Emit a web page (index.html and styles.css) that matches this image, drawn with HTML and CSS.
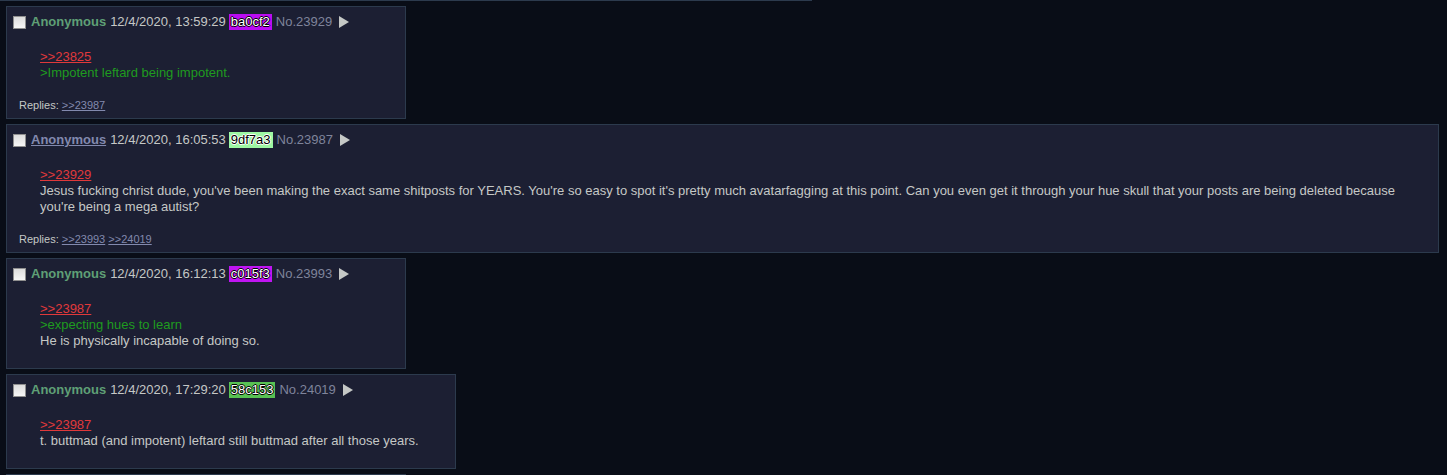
FILE: index.html
```html
<!DOCTYPE html>
<html>
<head>
    <meta charset="utf-8">
    <link rel="stylesheet" href="styles.css">
    <title>/pol/ - Thread</title>
</head>
<body>
    <div class="thread">
        <!-- bottom edge of the post above, scrolled out of view -->
        <div class="prev-edge"></div>

        <div class="post" id="p23929">
            <div class="post-info">
                <span class="check"></span>
                <span class="name">Anonymous</span>
                <span class="date">12/4/2020, 13:59:29</span>
                <span class="uid" style="background-color: #ba0cf2">ba0cf2</span>
                <span class="post-num">No.23929</span>
                <span class="menu-arrow"></span>
            </div>
            <blockquote class="post-message">
                <a href="#p23825" class="quote-link">&gt;&gt;23825</a><br>
                <span class="greentext">&gt;Impotent leftard being impotent.</span>
            </blockquote>
            <div class="replies">Replies: <a href="#p23987">&gt;&gt;23987</a></div>
        </div>

        <div class="post" id="p23987">
            <div class="post-info">
                <span class="check"></span>
                <a href="#" class="name name-email">Anonymous</a>
                <span class="date">12/4/2020, 16:05:53</span>
                <span class="uid uid-light" style="background-color: #9df7a3">9df7a3</span>
                <span class="post-num">No.23987</span>
                <span class="menu-arrow"></span>
            </div>
            <blockquote class="post-message">
                <a href="#p23929" class="quote-link">&gt;&gt;23929</a><br>
                Jesus fucking christ dude, you've been making the exact same shitposts for YEARS. You're so easy to spot it's pretty much avatarfagging at this point. Can you even get it through your hue skull that your posts are being deleted because you're being a mega autist?
            </blockquote>
            <div class="replies">Replies: <a href="#p23993">&gt;&gt;23993</a> <a href="#p24019">&gt;&gt;24019</a></div>
        </div>

        <div class="post" id="p23993">
            <div class="post-info">
                <span class="check"></span>
                <span class="name">Anonymous</span>
                <span class="date">12/4/2020, 16:12:13</span>
                <span class="uid" style="background-color: #c015f3">c015f3</span>
                <span class="post-num">No.23993</span>
                <span class="menu-arrow"></span>
            </div>
            <blockquote class="post-message">
                <a href="#p23987" class="quote-link">&gt;&gt;23987</a><br>
                <span class="greentext">&gt;expecting hues to learn</span><br>
                He is physically incapable of doing so.
            </blockquote>
        </div>

        <div class="post" id="p24019">
            <div class="post-info">
                <span class="check"></span>
                <span class="name">Anonymous</span>
                <span class="date">12/4/2020, 17:29:20</span>
                <span class="uid" style="background-color: #58c153">58c153</span>
                <span class="post-num">No.24019</span>
                <span class="menu-arrow"></span>
            </div>
            <blockquote class="post-message">
                <a href="#p23987" class="quote-link">&gt;&gt;23987</a><br>
                t. buttmad (and impotent) leftard still buttmad after all those years.
            </blockquote>
        </div>

        <!-- next post, only its top edge is in view -->
        <div class="post post-next"></div>
    </div>
</body>
</html>
```

FILE: styles.css
```css
body {
    background-color: #090d17;
    color: #c5c8c6;
    font-family: Arial, 'Liberation Sans', Helvetica, sans-serif;
    font-size: 13px;
    margin: 0;
    padding: 0;
    height: 100vh;
    overflow: hidden;
}

a {
    color: inherit;
}

.thread {
    display: flex;
    flex-direction: column;
    align-items: flex-start;
    padding: 0 8px 0 6px;
}

.prev-edge {
    width: 812px;
    height: 1px;
    margin-left: -6px;
    background-color: #2c3a4d;
}

/* Reply box */
.post {
    box-sizing: border-box;
    min-width: 400px;
    max-width: 100%;
    margin-top: 5px;
    padding: 7px 0 6px;
    background-color: #1c1f33;
    border: 1px solid #2c3a4d;
}

.post-next {
    height: 1px;
    padding: 0;
    border-bottom: none;
}

/* Header row */
.post-info {
    display: flex;
    align-items: center;
    height: 16px;
    line-height: 16px;
    padding-left: 6px;
    white-space: nowrap;
}

.check {
    box-sizing: border-box;
    width: 13px;
    height: 13px;
    margin-right: 5px;
    border: 1px solid #8f8f8f;
    background: linear-gradient(#dcdcdc, #f6f6f6);
}

.name {
    color: #5f9f76;
    font-weight: bold;
    margin-right: 4px;
}

.name-email {
    color: #8289ae;
    text-decoration: underline;
}

.date {
    margin-right: 3px;
}

.uid {
    padding: 0 2px;
    margin-right: 4px;
    color: #ffffff;
    text-shadow: -1px 0 #000, 1px 0 #000, 0 -1px #000, 0 1px #000;
}

.uid-light {
    color: #000000;
    text-shadow: -1px 0 #fff, 1px 0 #fff, 0 -1px #fff, 0 1px #fff;
}

.post-num {
    color: #7f849b;
    margin-right: 7px;
}

.menu-arrow {
    width: 0;
    height: 0;
    border-top: 6px solid transparent;
    border-bottom: 6px solid transparent;
    border-left: 10px solid #c5c8c6;
}

/* Message body */
.post-message {
    margin: 19px 36px 13px 33px;
    line-height: 16px;
}

.quote-link {
    color: #e0393b;
    text-decoration: underline;
}

.greentext {
    color: #1f9b1f;
}

.replies {
    padding: 4px 0 0 12px;
    font-size: 11px;
    line-height: 14px;
}

.replies a {
    color: #8289ae;
}
```
